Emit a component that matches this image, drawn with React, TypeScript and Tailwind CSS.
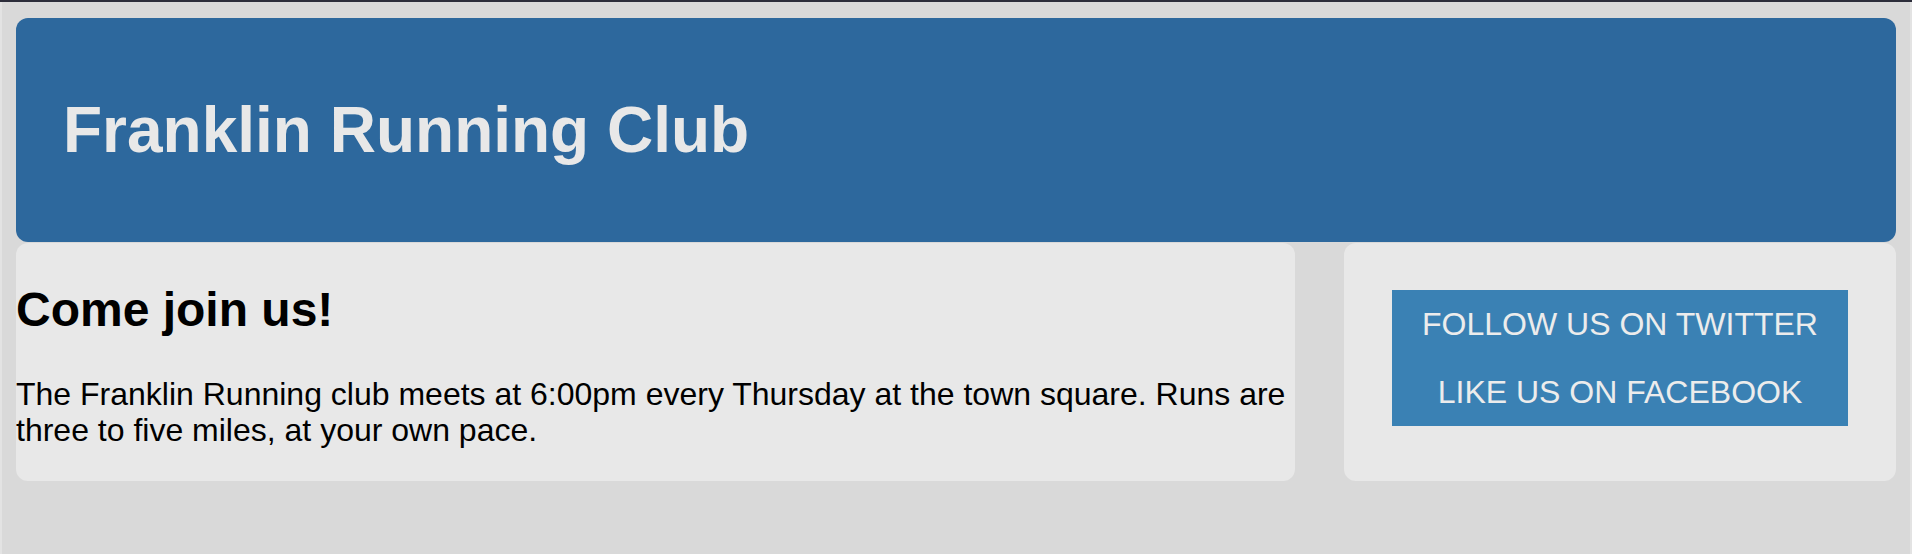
import React from 'react';

const LINKS = ['FOLLOW US ON TWITTER', 'LIKE US ON FACEBOOK'];

export default function App() {
  return (
    <div className="min-h-[554px] bg-[#d9d9d9] border-x-2 border-[#e3e3e3] font-['Liberation_Sans',Arial,sans-serif]">
      <div className="h-[2px] bg-[#2c2d3a] -mx-[2px]" />
      <div className="px-[14px] pt-[16px]">
        <header className="h-[224px] bg-[#2d689d] rounded-xl flex items-center pl-[47px]">
          <h1 className="text-[64px] leading-[76px] font-bold text-[#e8e8e8]">Franklin Running Club</h1>
        </header>

        <div className="flex gap-[49px] mt-[1px]">
          <main className="flex-1 bg-[#e8e8e8] rounded-xl flow-root">
            <h2 className="text-[48px] leading-[56px] font-bold text-black mt-[39px]">Come join us!</h2>
            <p className="text-[32px] leading-[36px] text-black mt-[38px] mb-[33px]">
              The Franklin Running club meets at 6:00pm every Thursday at the town square. Runs are three to five miles, at your own pace.
            </p>
          </main>

          <aside className="w-[552px] bg-[#e8e8e8] rounded-xl px-[48px] pt-[47px]">
            <ul className="bg-[#3a81b4]">
              {LINKS.map((link) => (
                <li key={link}>
                  <a href="#" className="block py-[16px] text-center text-[32px] leading-[36px] text-[#ececec]">
                    {link}
                  </a>
                </li>
              ))}
            </ul>
          </aside>
        </div>
      </div>
    </div>
  );
}
